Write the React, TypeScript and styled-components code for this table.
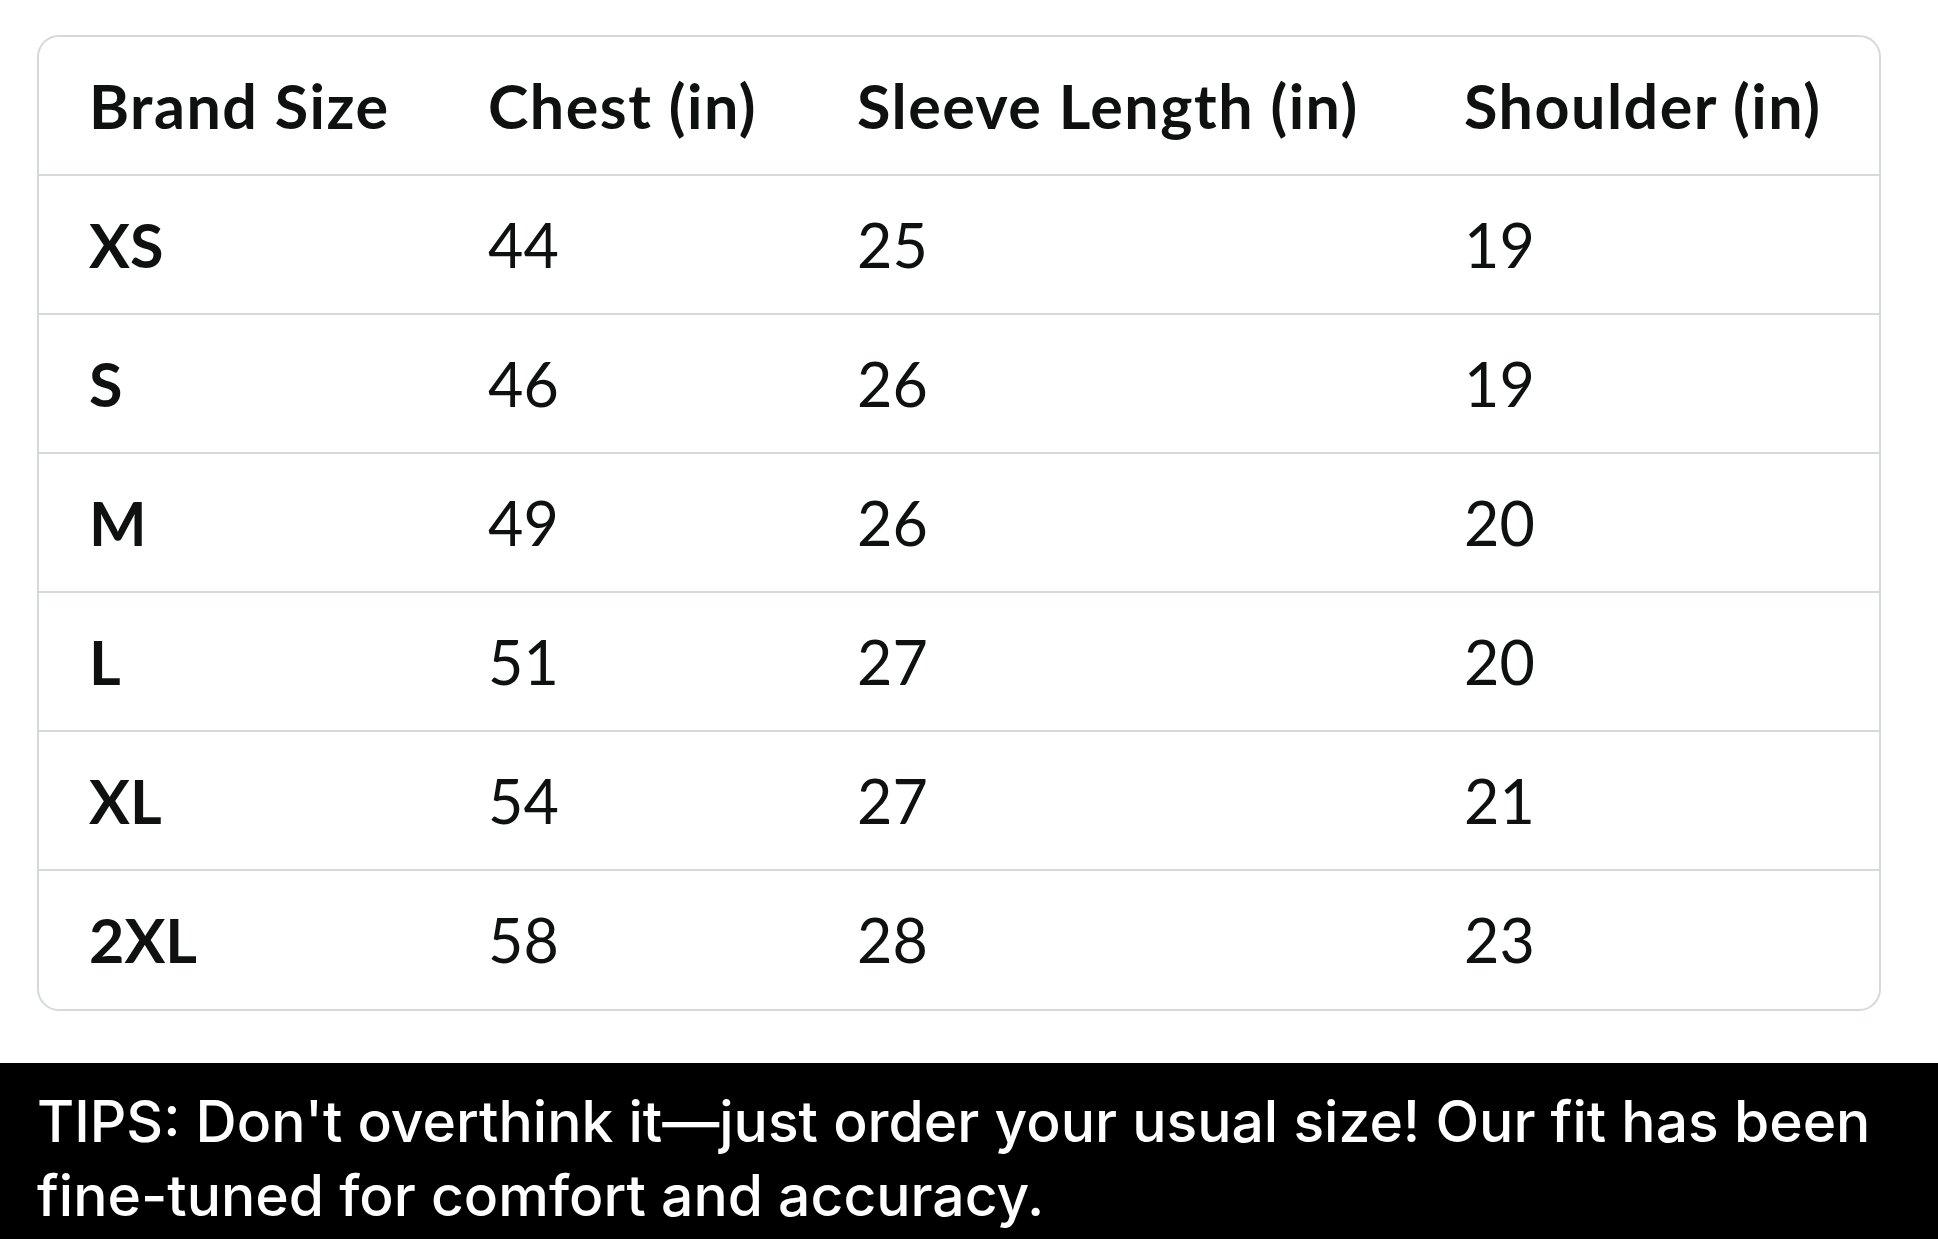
import React from 'react';
import styled, { createGlobalStyle } from 'styled-components';

const rows = [
  { size: 'XS', chest: 44, sleeve: 25, shoulder: 19 },
  { size: 'S', chest: 46, sleeve: 26, shoulder: 19 },
  { size: 'M', chest: 49, sleeve: 26, shoulder: 20 },
  { size: 'L', chest: 51, sleeve: 27, shoulder: 20 },
  { size: 'XL', chest: 54, sleeve: 27, shoulder: 21 },
  { size: '2XL', chest: 58, sleeve: 28, shoulder: 23 },
];

const App = () => {
  return (
    <>
      <GlobalStyle />
      <Page>
        <ChartSection>
          <SizeTable>
            <Row>
              <HeadCell>Brand Size</HeadCell>
              <HeadCell>Chest (in)</HeadCell>
              <HeadCell>Sleeve Length (in)</HeadCell>
              <HeadCell>Shoulder (in)</HeadCell>
            </Row>
            {rows.map((r) => (
              <Row key={r.size}>
                <SizeCell>{r.size}</SizeCell>
                <Cell>{r.chest}</Cell>
                <Cell>{r.sleeve}</Cell>
                <Cell>{r.shoulder}</Cell>
              </Row>
            ))}
          </SizeTable>
        </ChartSection>
        <TipsBar>
          <TipsText>
            TIPS: Don't overthink it—just order your usual size! Our fit has been
            <br />
            fine-tuned for comfort and accuracy.
          </TipsText>
        </TipsBar>
      </Page>
    </>
  );
};

export default App;

const GlobalStyle = createGlobalStyle`
  html, body {
    margin: 0;
    padding: 0;
    background: #ffffff;
  }
  * {
    box-sizing: border-box;
  }
`;

const Page = styled.main`
  display: flex;
  flex-direction: column;
  width: 1938px;
  height: 1239px;
  overflow: hidden;
  background: #ffffff;
`;

const ChartSection = styled.section`
  display: flex;
  padding: 35px 57px 0 37px;
  flex: 1;
`;

const SizeTable = styled.div`
  display: flex;
  flex-direction: column;
  width: 100%;
  height: 976px;
  border: 2px solid #d5d9d9;
  border-radius: 22px;
  overflow: hidden;
`;

const Row = styled.div`
  display: grid;
  grid-template-columns: 397px 369px 607px 1fr;
  align-items: center;
  height: 139px;
  border-bottom: 2px solid #d5d9d9;

  &:last-child {
    border-bottom: none;
    height: 137px;
  }
`;

const Cell = styled.div`
  padding-left: 52px;
  font-family: Lato, 'Open Sans', sans-serif;
  font-size: 61px;
  font-weight: 400;
  color: #0f1111;
  white-space: nowrap;
`;

const HeadCell = styled(Cell)`
  font-weight: 700;
  letter-spacing: 1.5px;
  &:first-child {
    padding-left: 50px;
  }
`;

const SizeCell = styled(Cell)`
  font-weight: 700;
  padding-left: 50px;
`;

const TipsBar = styled.footer`
  display: flex;
  align-items: flex-start;
  height: 176px;
  padding: 22px 0 0 37px;
  background: #000000;
`;

const TipsText = styled.p`
  margin: 0;
  font-family: Inter, Roboto, sans-serif;
  font-size: 57px;
  font-weight: 500;
  line-height: 74px;
  color: #ffffff;
  white-space: nowrap;
`;
